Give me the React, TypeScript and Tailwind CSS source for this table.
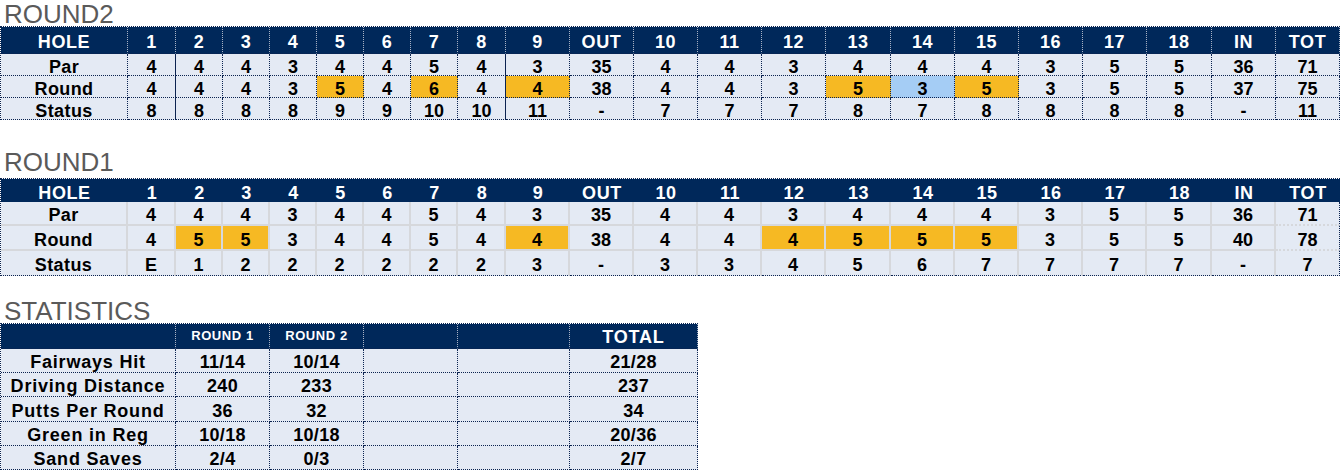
import React from "react";

const W = [
  "w-[127px]", "w-[48px]", "w-[47px]", "w-[47px]", "w-[47px]", "w-[47px]", "w-[47px]", "w-[47px]", "w-[48px]",
  "w-[64px]", "w-[64px]", "w-[64px]", "w-[64px]", "w-[64px]", "w-[65px]", "w-[64px]", "w-[64px]", "w-[64px]",
  "w-[64px]", "w-[65px]", "w-[64px]", "w-[64px]",
];

const HEAD = ["HOLE", "1", "2", "3", "4", "5", "6", "7", "8", "9", "OUT", "10", "11", "12", "13", "14", "15", "16", "17", "18", "IN", "TOT"];
const PAR = ["Par", "4", "4", "4", "3", "4", "4", "5", "4", "3", "35", "4", "4", "3", "4", "4", "4", "3", "5", "5", "36", "71"];

type Hi = "o" | "b" | "";

const R2_ROUND = ["Round", "4", "4", "4", "3", "5", "4", "6", "4", "4", "38", "4", "4", "3", "5", "3", "5", "3", "5", "5", "37", "75"];
const R2_HI: Hi[] = ["", "", "", "", "", "o", "", "o", "", "o", "", "", "", "", "o", "b", "o", "", "", "", "", ""];
const R2_STATUS = ["Status", "8", "8", "8", "8", "9", "9", "10", "10", "11", "-", "7", "7", "7", "8", "7", "8", "8", "8", "8", "-", "11"];

const R1_ROUND = ["Round", "4", "5", "5", "3", "4", "4", "5", "4", "4", "38", "4", "4", "4", "5", "5", "5", "3", "5", "5", "40", "78"];
const R1_HI: Hi[] = ["", "", "o", "o", "", "", "", "", "", "o", "", "", "", "o", "o", "o", "o", "", "", "", "", ""];
const R1_STATUS = ["Status", "E", "1", "2", "2", "2", "2", "2", "2", "3", "-", "3", "3", "4", "5", "6", "7", "7", "7", "7", "-", "7"];

const bgFor = (h: Hi) => (h === "o" ? "bg-[#f6b923]" : h === "b" ? "bg-[#a5cdf5]" : "bg-[#e4eaf4]");

function Title({ children, className = "" }: { children: React.ReactNode; className?: string }) {
  return (
    <div className={`h-[26px] pl-[4px] text-[26px] leading-[28px] text-[#5a5a5a] font-normal ${className}`}>{children}</div>
  );
}

function Round2() {
  const dataRow = (vals: string[], hi?: Hi[]) => (
    <div className="flex">
      {vals.map((v, i) => (
        <div
          key={i}
          className={`${W[i]} h-[22px] ${bgFor(hi ? hi[i] : "")} border-r border-b border-dotted border-[#0b2350] ${
            i === 1 || i === 8 ? "[border-right-style:solid]" : ""
          } flex items-center justify-center pt-1 text-[18px] font-bold text-black leading-[20px] ${i === 0 ? "tracking-[0.4px]" : ""}`}
        >
          {v}
        </div>
      ))}
    </div>
  );
  return (
    <div className="flex flex-col w-fit border-l border-t border-dotted border-[#0b2350]">
      <div className="flex">
        {HEAD.map((v, i) => (
          <div
            key={i}
            className={`${W[i]} h-[27px] bg-[#00285a] border-r border-b border-dotted border-r-[#a9b3c6] border-b-[#0b2350] flex items-center justify-center pt-1 text-[18px] font-bold text-white leading-[20px] tracking-[0.6px]`}
          >
            {v}
          </div>
        ))}
      </div>
      {dataRow(PAR)}
      {dataRow(R2_ROUND, R2_HI)}
      {dataRow(R2_STATUS)}
    </div>
  );
}

function Round1() {
  const dataRow = (vals: string[], h: string, hi?: Hi[], last = false) => (
    <div className="flex">
      {vals.map((v, i) => {
        const isLastCol = i === vals.length - 1;
        const rb = isLastCol ? "border-r border-dotted border-r-[#0b2350]" : "border-r-2 border-r-[#d6d8dc]";
        const bb = last ? "border-b border-b-[#0b2350] [border-bottom-style:dotted]" : "border-b-2 border-b-[#d6d8dc]";
        return (
          <div
            key={i}
            className={`${W[i]} ${h} ${bgFor(hi ? hi[i] : "")} ${rb} ${bb} flex items-center justify-center pt-1 text-[18px] font-bold text-black leading-[20px] ${i === 0 ? "tracking-[0.4px]" : ""}`}
          >
            {v}
          </div>
        );
      })}
    </div>
  );
  return (
    <div className="flex flex-col w-fit border-l border-t border-dotted border-[#0b2350]">
      <div className="flex">
        {HEAD.map((v, i) => (
          <div
            key={i}
            className={`${W[i]} h-[23px] bg-[#00285a] flex items-center justify-center pt-1 text-[18px] font-bold text-white leading-[20px] tracking-[0.6px]`}
          >
            {v}
          </div>
        ))}
      </div>
      {dataRow(PAR, "h-[24px]")}
      {dataRow(R1_ROUND, "h-[25px]", R1_HI)}
      {dataRow(R1_STATUS, "h-[25px]", undefined, true)}
    </div>
  );
}

const SW = ["w-[175px]", "w-[94px]", "w-[94px]", "w-[94px]", "w-[112px]", "w-[128px]"];
const STATS = [
  ["Fairways Hit", "11/14", "10/14", "", "", "21/28"],
  ["Driving Distance", "240", "233", "", "", "237"],
  ["Putts Per Round", "36", "32", "", "", "34"],
  ["Green in Reg", "10/18", "10/18", "", "", "20/36"],
  ["Sand Saves", "2/4", "0/3", "", "", "2/7"],
];
const SH = ["h-[24px]", "h-[24px]", "h-[25px]", "h-[24px]", "h-[24px]"];

function Stats() {
  const head = ["", "ROUND 1", "ROUND 2", "", "", "TOTAL"];
  return (
    <div className="flex flex-col w-fit border-l border-t border-dotted border-[#0b2350]">
      <div className="flex">
        {head.map((v, i) => (
          <div
            key={i}
            className={`${SW[i]} h-[25px] bg-[#00285a] border-r border-b border-dotted border-r-[#a9b3c6] border-b-[#0b2350] flex items-center justify-center font-bold text-white ${
              i === 5 ? "text-[18px] leading-[20px] pt-[2px] tracking-[0.8px]" : "text-[13px] leading-[14px] tracking-[0.6px]"
            }`}
          >
            {v}
          </div>
        ))}
      </div>
      {STATS.map((row, r) => (
        <div className="flex" key={r}>
          {row.map((v, i) => (
            <div
              key={i}
              className={`${SW[i]} ${SH[r]} bg-[#e4eaf4] border-r border-b border-dotted border-[#0b2350] flex items-center justify-center pt-[3px] text-[18px] font-bold text-black leading-[20px] ${
                i === 0 ? "tracking-[0.8px]" : "tracking-[0.3px]"
              }`}
            >
              {v}
            </div>
          ))}
        </div>
      ))}
    </div>
  );
}

export default function App() {
  return (
    <div className="w-[1341px] h-[471px] bg-white overflow-hidden font-['Liberation_Sans',Arial,sans-serif]">
      <Title>ROUND2</Title>
      <Round2 />
      <Title className="mt-7 mb-1">ROUND1</Title>
      <Round1 />
      <Title className="mt-[21px]">STATISTICS</Title>
      <Stats />
    </div>
  );
}
